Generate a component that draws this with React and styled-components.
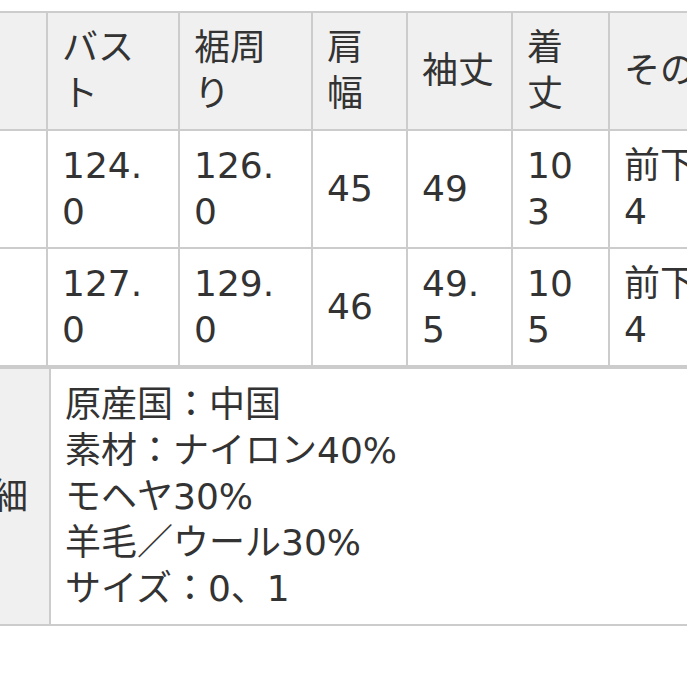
import React from 'react';
import styled, { createGlobalStyle } from 'styled-components';

const GlobalStyle = createGlobalStyle`
  html, body {
    margin: 0;
    padding: 0;
    background: #ffffff;
  }
  body {
    font-family: "DejaVu Sans", "Noto Sans CJK JP", sans-serif;
    color: #333333;
  }
`;

const Page = styled.div`
  width: 687px;
  height: 687px;
  overflow: hidden;
  padding-top: 11px;
  box-sizing: border-box;
`;

const SizeTable = styled.table`
  border-collapse: collapse;
  table-layout: fixed;
  width: ${props => props.$width}px;
  margin-left: ${props => props.$shift}px;
  font-size: 36px;
  line-height: 46px;
`;

const HeadCell = styled.th`
  background: #f0f0f0;
  border: 2px solid #cccccc;
  font-weight: 400;
  text-align: left;
  vertical-align: middle;
  padding: 0 8px 0 14px;
  height: 118px;
  box-sizing: border-box;
  white-space: pre-line;
`;

const Cell = styled.td`
  background: #ffffff;
  border: 2px solid #cccccc;
  text-align: left;
  vertical-align: middle;
  padding: 0 8px 0 14px;
  height: 118px;
  box-sizing: border-box;
  white-space: pre-line;
`;

const LabelCell = styled.th`
  background: #f0f0f0;
  border: 2px solid #cccccc;
  font-weight: 400;
  text-align: left;
  vertical-align: middle;
  padding: 0 15px;
  box-sizing: border-box;
`;

const DetailCell = styled.td`
  background: #ffffff;
  border: 2px solid #cccccc;
  text-align: left;
  vertical-align: top;
  padding: 13px 15px 12px 14px;
  box-sizing: border-box;
`;

const DetailLine = styled.div`
  white-space: nowrap;
`;

// the page is a crop: the first column and the last one run past the edges
const columns = [
  { key: 'size', label: '', w: 100 },
  { key: 'bust', label: 'バス\nト', w: 132 },
  { key: 'hem', label: '裾周\nり', w: 133 },
  { key: 'shoulder', label: '肩\n幅', w: 95 },
  { key: 'sleeve', label: '袖丈', w: 105 },
  { key: 'length', label: '着\n丈', w: 97 },
  { key: 'other', label: 'その他', w: 200 },
];

const rows = [
  { size: '0', bust: '124.\n0', hem: '126.\n0', shoulder: '45', sleeve: '49', length: '10\n3', other: '前下がり\n4' },
  { size: '1', bust: '127.\n0', hem: '129.\n0', shoulder: '46', sleeve: '49.\n5', length: '10\n5', other: '前下がり\n4' },
];

const details = [
  '原産国：中国',
  '素材：ナイロン40%',
  'モヘヤ30%',
  '羊毛／ウール30%',
  'サイズ：0、1',
];

const tableWidth = columns.reduce((sum, c) => sum + c.w, 0);

export default function App() {
  return (
    <Page>
      <GlobalStyle />
      <SizeTable $shift={-54} $width={tableWidth}>
        <colgroup>
          {columns.map(c => <col key={c.key} style={{ width: c.w }} />)}
        </colgroup>
        <thead>
          <tr>
            {columns.map(c => (
              <HeadCell key={c.key}>{c.label}</HeadCell>
            ))}
          </tr>
        </thead>
        <tbody>
          {rows.map(r => (
            <tr key={r.size}>
              {columns.map(c => (
                <Cell key={c.key}>{r[c.key]}</Cell>
              ))}
            </tr>
          ))}
        </tbody>
      </SizeTable>
      <SizeTable $shift={-61} $width={810}>
        <colgroup>
          <col style={{ width: 110 }} />
          <col style={{ width: 700 }} />
        </colgroup>
        <tbody>
          <tr>
            <LabelCell>詳細</LabelCell>
            <DetailCell>
              {details.map(line => (
                <DetailLine key={line}>{line}</DetailLine>
              ))}
            </DetailCell>
          </tr>
        </tbody>
      </SizeTable>
    </Page>
  );
}
